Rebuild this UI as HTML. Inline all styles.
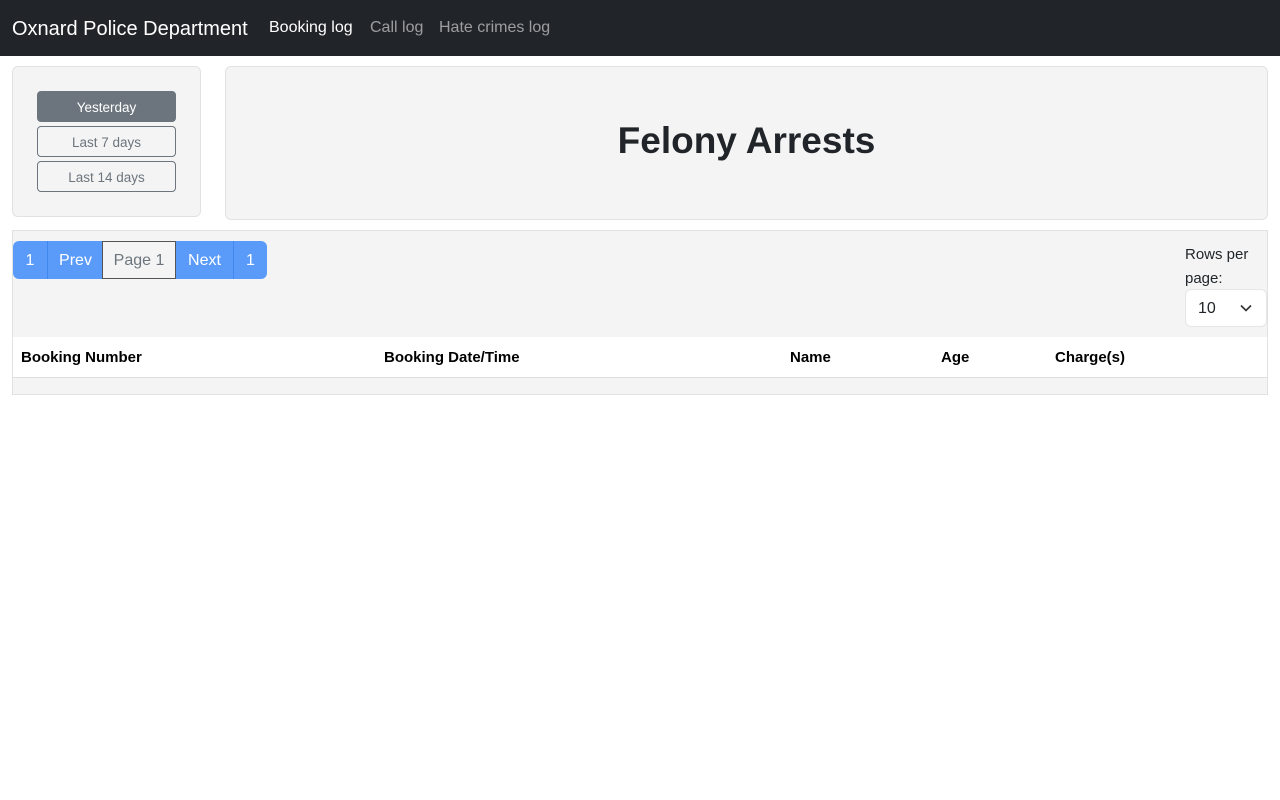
<!DOCTYPE html>
<html><head><style>
*{box-sizing:border-box;margin:0;padding:0}
body{width:1280px;height:800px;background:#fff;font-family:"Liberation Sans",sans-serif;color:#212529;position:relative}
.nav{position:absolute;left:0;top:0;width:1280px;height:56px;background:#212529}
.nav span{position:absolute;top:19px;font-size:16px;color:rgba(255,255,255,.55)}
.abs{position:absolute}
.card{position:absolute;background:#f4f4f4;border:1px solid #e2e2e2;border-radius:6px}
.btn{position:absolute;left:37px;width:139px;height:31px;border:1px solid #6c757d;border-radius:4px;font-size:13.5px;color:#6c757d;text-align:center;line-height:31px}
.pg{position:absolute;top:241px;height:38px;line-height:40px;font-size:16px;color:#fff;background:#5a9bf9;text-align:center}
.th{position:absolute;top:349px;font-size:15px;font-weight:bold;color:#000}
</style></head><body>
<div class="nav">
<span style="left:12px;top:18px;font-size:20px;color:#fff">Oxnard Police Department</span>
<span style="left:269px;color:#fff">Booking log</span>
<span style="left:370px">Call log</span>
<span style="left:439px">Hate crimes log</span>
</div>
<div class="card" style="left:12px;top:66px;width:189px;height:151px"></div>
<div class="btn" style="top:91px;background:#6c757d;color:#fff">Yesterday</div>
<div class="btn" style="top:126px">Last 7 days</div>
<div class="btn" style="top:161px">Last 14 days</div>
<div class="card" style="left:225px;top:66px;width:1043px;height:154px"></div>
<div class="abs" style="left:225px;width:1043px;top:120px;text-align:center;font-size:37px;font-weight:bold;color:#212529">Felony Arrests</div>
<div class="abs" style="left:12px;top:230px;width:1256px;height:165px;background:#f4f4f4;border:1px solid #e2e2e2"></div>
<div class="abs" style="left:13px;top:337px;width:1254px;height:41px;background:#fff;border-bottom:1px solid #ddd"></div>
<div class="pg" style="left:13px;width:35px;border-radius:6px 0 0 6px;border-right:1px solid #3f86ee">1</div>
<div class="pg" style="left:48px;width:55px">Prev</div>
<div class="pg" style="left:102px;width:74px;background:#f4f4f4;color:#6c757d;border:1px solid #555;line-height:38px">Page 1</div>
<div class="pg" style="left:176px;width:58px;border-right:1px solid #3f86ee">Next</div>
<div class="pg" style="left:234px;width:33px;border-radius:0 6px 6px 0">1</div>
<div class="abs" style="left:1185px;top:243px;font-size:15px;line-height:24px">Rows per<br>page:</div>
<div class="abs" style="left:1185px;top:289px;width:82px;height:38px;background:#fff;border:1px solid #e6e6e6;border-radius:6px;font-size:16px;line-height:38px;padding-left:12px">10
<svg style="position:absolute;right:14px;top:14px" width="12" height="8" viewBox="0 0 12 8"><path d="M1 1.5l5 5 5-5" stroke="#333" stroke-width="1.6" fill="none"/></svg></div>
<div class="th" style="left:21px">Booking Number</div>
<div class="th" style="left:384px">Booking Date/Time</div>
<div class="th" style="left:790px">Name</div>
<div class="th" style="left:941px">Age</div>
<div class="th" style="left:1055px">Charge(s)</div>
</body></html>
